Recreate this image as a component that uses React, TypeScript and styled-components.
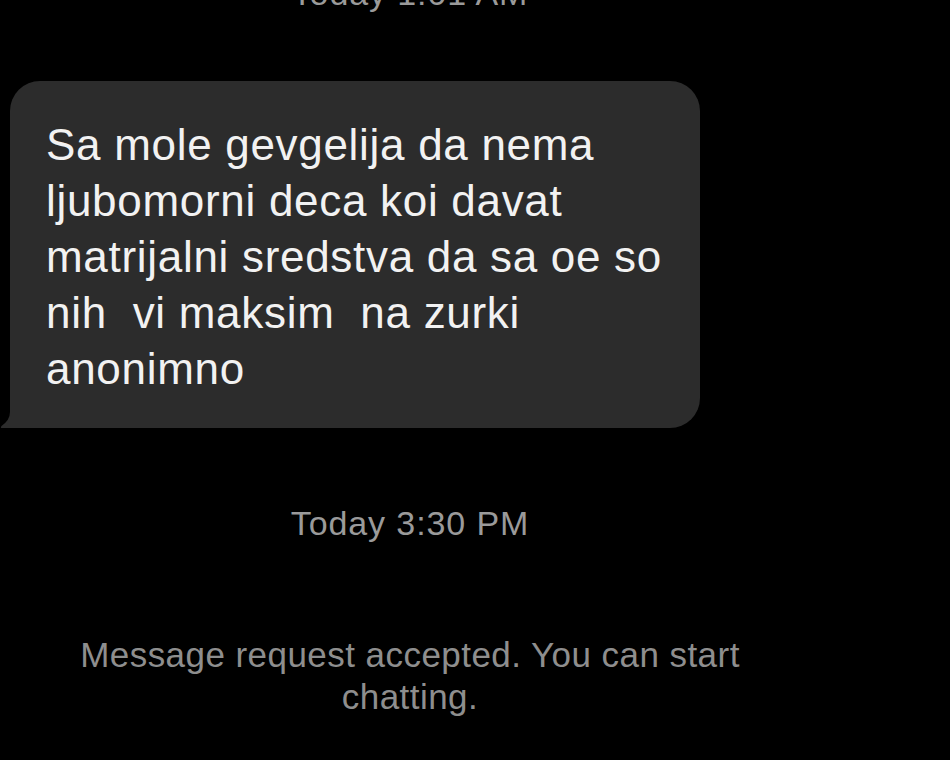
import React from "react";
import styled, { createGlobalStyle } from "styled-components";

const GlobalStyle = createGlobalStyle`
  html, body {
    margin: 0;
    padding: 0;
    background: #000;
  }
  body {
    font-family: "Liberation Sans", Arial, sans-serif;
    -webkit-font-smoothing: antialiased;
  }
`;

const Screen = styled.div`
  width: 950px;
  height: 760px;
  overflow: hidden;
  background: #000;
  display: flex;
  flex-direction: column;
`;

const Column = styled.div`
  width: 820px;
  display: flex;
  flex-direction: column;
`;

const Stamp = styled.div<{ $top: number; $bottom: number }>`
  text-align: center;
  color: #9a9a9a;
  font-size: 34px;
  letter-spacing: 0.9px;
  line-height: 38px;
  margin-top: ${(p) => p.$top}px;
  margin-bottom: ${(p) => p.$bottom}px;
`;

const Row = styled.div`
  display: flex;
  padding-left: 10px;
`;

const Bubble = styled.div`
  position: relative;
  width: 690px;
  box-sizing: border-box;
  background: #2c2c2c;
  border-radius: 30px 30px 30px 4px;
  padding: 36px 10px 31px 36px;
  color: #f2f2f2;
  font-size: 44px;
  letter-spacing: 0.7px;
  line-height: 56px;
  white-space: pre-wrap;
`;

const Tail = styled.svg`
  position: absolute;
  left: -10px;
  bottom: 0;
`;

const Notice = styled.div`
  margin: 92px auto 0;
  max-width: 720px;
  text-align: center;
  color: #8e8e8e;
  font-size: 35px;
  letter-spacing: 0.45px;
  line-height: 42px;
`;

const lines = [
  "Sa mole gevgelija da nema",
  "ljubomorni deca koi davat",
  "matrijalni sredstva da sa oe so",
  "nih  vi maksim  na zurki",
  "anonimno",
];

export default function App() {
  return (
    <Screen>
      <GlobalStyle />
      <Column>
        <Stamp $top={-26} $bottom={69}>Today 1:01 AM</Stamp>
        <Row>
          <Bubble>
            {lines.join("\n")}
            <Tail width="14" height="16" viewBox="0 0 14 16">
              <path d="M14 0 L14 16 L2 16 Q0 16 1.5 14 Q10 8 10 0 Z" fill="#2c2c2c" />
            </Tail>
          </Bubble>
        </Row>
        <Stamp $top={76} $bottom={0}>Today 3:30 PM</Stamp>
        <Notice>Message request accepted. You can start chatting.</Notice>
      </Column>
    </Screen>
  );
}
